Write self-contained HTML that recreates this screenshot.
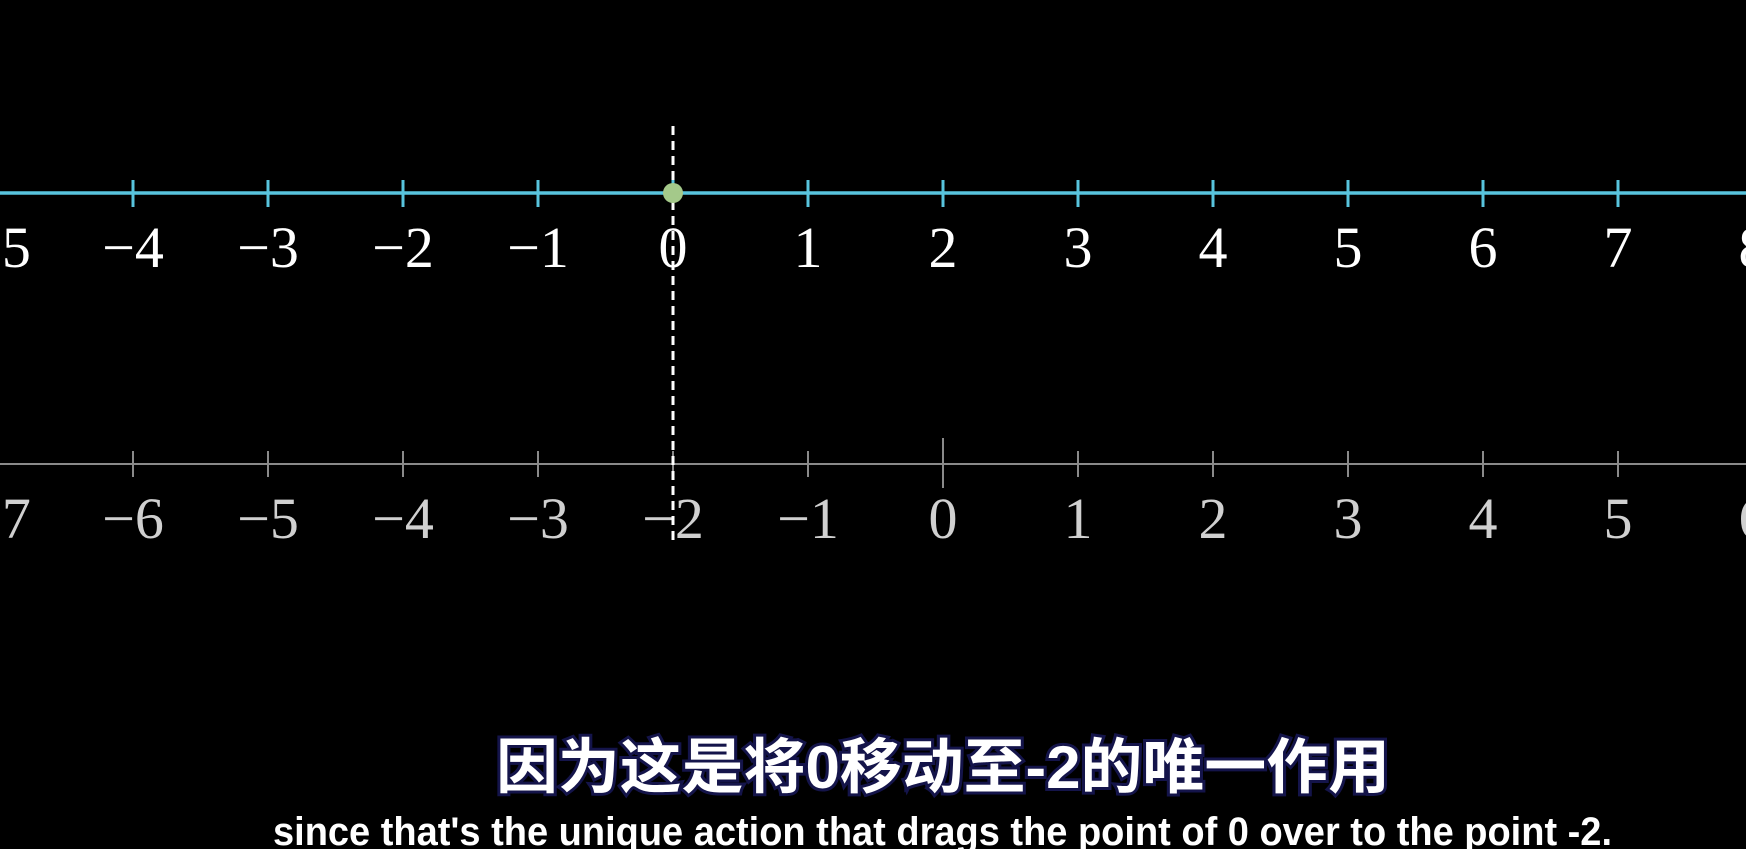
<!DOCTYPE html>
<html><head><meta charset="utf-8"><style>
html,body{margin:0;padding:0;background:#000;width:1746px;height:849px;overflow:hidden}
svg{display:block}
</style></head><body>
<svg width="1746" height="849" viewBox="0 0 1746 849" xmlns="http://www.w3.org/2000/svg">
<rect width="1746" height="849" fill="#000"/>
<line x1="0" y1="193" x2="1746" y2="193" stroke="#58c4dd" stroke-width="3.5"/>
<g stroke="#58c4dd" stroke-width="3">
<line x1="133" y1="180" x2="133" y2="207"/><line x1="268" y1="180" x2="268" y2="207"/>
<line x1="403" y1="180" x2="403" y2="207"/><line x1="538" y1="180" x2="538" y2="207"/>
<line x1="673" y1="180" x2="673" y2="207"/><line x1="808" y1="180" x2="808" y2="207"/>
<line x1="943" y1="180" x2="943" y2="207"/><line x1="1078" y1="180" x2="1078" y2="207"/>
<line x1="1213" y1="180" x2="1213" y2="207"/><line x1="1348" y1="180" x2="1348" y2="207"/>
<line x1="1483" y1="180" x2="1483" y2="207"/><line x1="1618" y1="180" x2="1618" y2="207"/>
</g>
<g fill="#fff" font-family="Liberation Serif, serif" font-size="58" text-anchor="middle">
<text x="0" y="267">−5</text><text x="133" y="267">−4</text><text x="268" y="267">−3</text>
<text x="403" y="267">−2</text><text x="538" y="267">−1</text><text x="673" y="267">0</text>
<text x="808" y="267">1</text><text x="943" y="267">2</text><text x="1078" y="267">3</text>
<text x="1213" y="267">4</text><text x="1348" y="267">5</text><text x="1483" y="267">6</text>
<text x="1618" y="267">7</text><text x="1753" y="267">8</text>
</g>
<line x1="0" y1="464" x2="1746" y2="464" stroke="#8a8a8a" stroke-width="2"/>
<g stroke="#8a8a8a" stroke-width="2">
<line x1="133" y1="451" x2="133" y2="477"/><line x1="268" y1="451" x2="268" y2="477"/>
<line x1="403" y1="451" x2="403" y2="477"/><line x1="538" y1="451" x2="538" y2="477"/>
<line x1="673" y1="451" x2="673" y2="477"/><line x1="808" y1="451" x2="808" y2="477"/>
<line x1="943" y1="438" x2="943" y2="488"/><line x1="1078" y1="451" x2="1078" y2="477"/>
<line x1="1213" y1="451" x2="1213" y2="477"/><line x1="1348" y1="451" x2="1348" y2="477"/>
<line x1="1483" y1="451" x2="1483" y2="477"/><line x1="1618" y1="451" x2="1618" y2="477"/>
</g>
<g fill="#d0d0d0" font-family="Liberation Serif, serif" font-size="58" text-anchor="middle">
<text x="0" y="538">−7</text><text x="133" y="538">−6</text><text x="268" y="538">−5</text>
<text x="403" y="538">−4</text><text x="538" y="538">−3</text><text x="673" y="538">−2</text>
<text x="808" y="538">−1</text><text x="943" y="538">0</text><text x="1078" y="538">1</text>
<text x="1213" y="538">2</text><text x="1348" y="538">3</text><text x="1483" y="538">4</text>
<text x="1618" y="538">5</text><text x="1753" y="538">6</text>
</g>
<line x1="673" y1="126" x2="673" y2="545" stroke="#fff" stroke-width="3" stroke-dasharray="9,6"/>
<circle cx="673" cy="193" r="10" fill="#a4c98a"/>
<text x="496" y="788" textLength="894" lengthAdjust="spacingAndGlyphs" font-family="Liberation Sans, Noto Sans CJK SC, sans-serif" font-weight="bold" font-size="60" fill="#fff" stroke="#14144a" stroke-width="6" paint-order="stroke">因为这是将0移动至-2的唯一作用</text>
<text x="273" y="845" textLength="1339" lengthAdjust="spacingAndGlyphs" font-family="Liberation Sans, sans-serif" font-weight="bold" font-size="40" fill="#fff" stroke="#000" stroke-width="3" paint-order="stroke">since that's the unique action that drags the point of 0 over to the point -2.</text>
</svg>
</body></html>
